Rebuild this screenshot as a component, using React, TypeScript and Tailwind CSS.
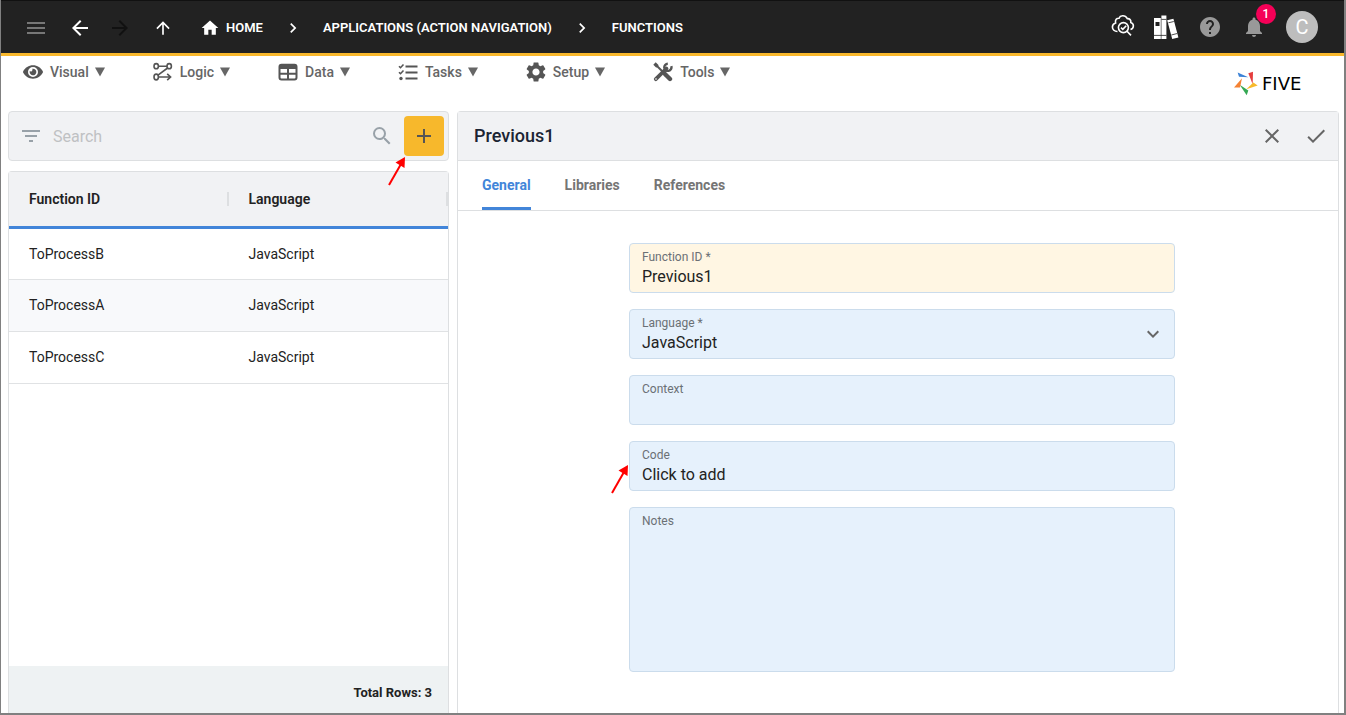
import React, { useState } from 'react';
import {
  MdAdd,
  MdArrowBack,
  MdArrowForward,
  MdArrowUpward,
  MdCheck,
  MdChevronRight,
  MdClose,
  MdExpandMore,
  MdFilterList,
  MdHelp,
  MdHome,
  MdMenu,
  MdNotifications,
  MdSearch,
  MdSettings,
} from 'react-icons/md';
import { FaEye } from 'react-icons/fa';

interface FunctionRow {
  id: string;
  language: string;
}

const rows: FunctionRow[] = [
  { id: 'ToProcessB', language: 'JavaScript' },
  { id: 'ToProcessA', language: 'JavaScript' },
  { id: 'ToProcessC', language: 'JavaScript' },
];

const LogicIcon = () => (
  <svg width="20" height="20" viewBox="0 0 20 20" fill="none" stroke="currentColor" strokeWidth="1.6">
    <ellipse cx="3.2" cy="4.2" rx="2.2" ry="2.6" />
    <ellipse cx="16.2" cy="4.2" rx="2.2" ry="2.6" />
    <ellipse cx="3.2" cy="15" rx="2.2" ry="2.9" />
    <path d="M5.4 4.2H14M14.6 6L5 13.2M5.4 15H17M14.2 11.8L17.6 15L14.2 18.2" />
  </svg>
);

const DataIcon = () => (
  <svg width="20" height="20" viewBox="0 0 20 20" fill="none" stroke="currentColor" strokeWidth="2">
    <rect x="1.5" y="2.8" width="17" height="14.8" rx="2" />
    <path d="M1.5 5H18.5" strokeWidth="4" />
    <path d="M2 11.8H18M10 6V17" />
  </svg>
);

const TasksIcon = () => (
  <svg width="20" height="20" viewBox="0 0 20 20" fill="none" stroke="currentColor" strokeWidth="2">
    <path d="M7.5 4.5H19.5M7.5 10.5H19.5M7.5 16.5H19.5" />
    <path d="M1 4.2L2.5 5.7L5.5 2.5M1 10.2L2.5 11.7L5.5 8.5" strokeWidth="1.6" />
    <circle cx="3" cy="16.5" r="1.7" fill="currentColor" stroke="none" />
  </svg>
);

const ToolsIcon = () => (
  <svg width="20" height="20" viewBox="0 0 20 20" fill="none" stroke="currentColor">
    <path d="M2.8 17.2L13.5 6.5" strokeWidth="3.8" strokeLinecap="round" />
    <path d="M18.3 4.2A3.6 3.6 0 1 1 14.8 1.7" strokeWidth="2.4" />
    <path d="M3 3L11 11" strokeWidth="2" />
    <path d="M1.5 1.5L4.5 4.5" strokeWidth="3.4" />
    <path d="M12.2 12.2L17 17" strokeWidth="4.4" strokeLinecap="round" />
    <circle cx="3" cy="17" r="0.8" fill="white" stroke="none" />
  </svg>
);

const CloudSearchIcon = () => (
  <svg width="24" height="24" viewBox="0 0 24 24" fill="none" stroke="currentColor" strokeWidth="1.6">
    <path d="M6.5 18.5C3.6 18.6 1.4 16.6 1.4 14C1.4 12 2.8 10.4 4.6 9.9C3.8 6.8 5.8 5 8 5.2C9 2.6 13.8 1.2 16.3 5.6C18.7 5.4 20.2 7.2 19.8 9.4C23.4 10.6 23.2 15.6 19.5 16.6" />
    <circle cx="12.4" cy="14.6" r="5" />
    <path d="M10 14.6L11.8 16.4L15.2 12.8M16 18.2L20 22.4" />
  </svg>
);

const BooksIcon = () => (
  <svg width="26" height="26" viewBox="0 0 26 26" fill="currentColor">
    <path d="M1 4H7.8V25H1Z" />
    <path d="M8.4 1.5H13.4V25H8.4Z" />
    <path d="M14.2 6.3L20.4 4.8L25.4 23.4L19.2 25Z" />
    <path d="M2.5 8H6.5V12H2.5Z" fill="#222222" />
    <path d="M1 21.4H13.4M8.4 5.4H13.4M15.4 8.8L20.8 7.5M18.3 21L24.2 19.5" fill="none" stroke="#222222" strokeWidth="0.8" />
  </svg>
);

const FiveMark = () => (
  <svg width="24" height="25" viewBox="432 214 72 74">
    <path d="M443 218L475 232L447 231Z" fill="#3b82d6" />
    <path d="M475 220L489 216L488 253Z" fill="#e53e3e" />
    <path d="M490 248L503 257L469 268Z" fill="#f7b92b" />
    <path d="M449 255L475 272L470 286Z" fill="#35a853" />
    <path d="M456 235L450 263L432 263Z" fill="#f58233" />
  </svg>
);

const RedArrow = () => (
  <svg width="18" height="30" viewBox="0 0 18 30">
    <path d="M1 29L13 8" stroke="#ff0000" strokeWidth="2" />
    <path d="M17 1L16.5 12L7.5 6.5Z" fill="#ff0000" />
  </svg>
);

const menus = [
  { label: 'Visual', icon: <FaEye size={20} /> },
  { label: 'Logic', icon: <LogicIcon /> },
  { label: 'Data', icon: <DataIcon /> },
  { label: 'Tasks', icon: <TasksIcon /> },
  { label: 'Setup', icon: <MdSettings size={24} className="-mx-0.5" /> },
  { label: 'Tools', icon: <ToolsIcon /> },
];

const tabs = ['General', 'Libraries', 'References'];

const fieldBox = 'relative rounded border border-[#cbdcec] px-3 pt-[3px] pb-[5px]';
const fieldLabel = 'block text-xs leading-5 text-[#6b7075]';
const fieldValue = 'block h-5 w-full bg-transparent text-left text-base leading-5 text-[#222222] outline-none';

const Header: React.FC = () => (
  <header className="flex h-14 shrink-0 items-center justify-between border-t border-b-3 border-t-[#111111] border-b-[#f9b82c] bg-[#222222] pr-[26px] pl-[23px] text-white">
    <div className="flex items-center pt-0.5">
      <button aria-label="Menu" className="mr-5 text-[#777777]"><MdMenu size={24} /></button>
      <button aria-label="Back" className="mr-4"><MdArrowBack size={24} /></button>
      <button aria-label="Forward" disabled className="mr-[21px] text-[#111111]"><MdArrowForward size={24} /></button>
      <button aria-label="Up" className="mr-[27px]"><MdArrowUpward size={20} /></button>
      <nav className="flex items-center text-[13px] leading-5 font-semibold">
        <a href="#home" className="flex items-center gap-1.5"><MdHome size={20} />HOME</a>
        <MdChevronRight size={20} className="mx-5" />
        <a href="#applications">APPLICATIONS (ACTION NAVIGATION)</a>
        <MdChevronRight size={20} className="mx-5" />
        <a href="#functions">FUNCTIONS</a>
      </nav>
    </div>
    <div className="flex items-center">
      <button aria-label="Inspect" className="mr-[18px] mb-1"><CloudSearchIcon /></button>
      <button aria-label="Library" className="mr-[19px]"><BooksIcon /></button>
      <button aria-label="Help" className="mr-5 text-[#999999]"><MdHelp size={24} /></button>
      <button aria-label="Notifications" className="relative mr-5 text-[#999999]">
        <MdNotifications size={24} />
        <span className="absolute -top-[11px] -right-2.5 flex h-5 w-5 items-center justify-center rounded-full bg-[#f50057] text-xs font-medium text-white">1</span>
      </button>
      <button className="flex h-8 w-8 items-center justify-center rounded-full bg-[#bdbdbd] text-xl text-white">C</button>
    </div>
  </header>
);

const MenuBar: React.FC = () => (
  <div className="flex h-[55px] shrink-0 items-center justify-between pr-[22px] pl-[22px]">
    <nav className="flex gap-12 self-start pt-1">
      {menus.map((menu) => (
        <button key={menu.label} className="flex h-6 items-center text-sm font-medium text-[#666666]">
          <span className="mr-[7px] text-[#555555]">{menu.icon}</span>
          {menu.label}
          <svg width="10" height="10" viewBox="0 0 10 10" fill="currentColor" className="ml-1.5">
            <path d="M0 0.5H10L5 9.5Z" />
          </svg>
        </button>
      ))}
    </nav>
    <div className="flex items-center gap-1">
      <FiveMark />
      <span className="w-[60px] font-['DejaVu_Sans'] text-lg leading-6 text-black">FIVE</span>
    </div>
  </div>
);

const FunctionList: React.FC = () => (
  <div className="flex min-h-0 flex-col gap-2.5">
    <div className="relative flex shrink-0 items-center rounded border border-[#dddfe1] bg-[#f1f2f4] py-1 pr-1 pl-2.5 text-[#98a1a8]">
      <MdFilterList size={24} />
      <input aria-label="Search" placeholder="Search" className="h-10 min-w-0 flex-1 bg-transparent px-2.5 text-base text-[#222222] outline-none placeholder:text-[#bfc1c3]" />
      <MdSearch size={24} className="mr-2.5" />
      <button aria-label="Add" className="flex h-10 w-10 items-center justify-center rounded bg-[#f7b82c] text-[#555555]"><MdAdd size={24} /></button>
      <div className="pointer-events-none absolute right-[42px] top-11"><RedArrow /></div>
    </div>
    <div className="flex min-h-0 flex-1 flex-col rounded-t border border-b-0 border-[#dddfe1]">
      <table className="w-full table-fixed text-left text-sm text-[#222222]">
        <thead>
          <tr className="h-[55px] border-b-3 border-[#4285d9] bg-[#f1f2f4]">
            {['Function ID', 'Language'].map((name) => (
              <th key={name} className="p-0 font-semibold">
                <div className="flex items-center justify-between pl-5">
                  {name}
                  <span className="h-3.5 w-0.5 bg-[#dddfe1]" />
                </div>
              </th>
            ))}
          </tr>
        </thead>
        <tbody>
          {rows.map((row) => (
            <tr key={row.id} className="h-[52px] border-b border-[#e0e2e4] even:bg-[#f8f9fb]">
              <td className="px-5">{row.id}</td>
              <td className="px-5">{row.language}</td>
            </tr>
          ))}
        </tbody>
      </table>
      <div className="mt-auto bg-[#eef2f3] px-4 pt-[17px] pb-2.5 text-right text-[13px] leading-5 font-bold text-[#222222]">Total Rows: 3</div>
    </div>
  </div>
);

const FunctionForm: React.FC = () => {
  const [tab, setTab] = useState('General');

  return (
    <div className="flex min-h-0 flex-col rounded-t border border-b-0 border-[#dddfe1]">
      <div className="flex h-[49px] shrink-0 items-center justify-between border-b border-[#dddfe1] bg-[#f1f2f4] pr-2.5 pl-4">
        <h1 className="text-lg font-medium text-[#1b2433]">Previous1</h1>
        <div className="flex gap-5 text-[#666666]">
          <button aria-label="Cancel"><MdClose size={24} /></button>
          <button aria-label="Save"><MdCheck size={24} /></button>
        </div>
      </div>
      <div role="tablist" className="flex h-[50px] shrink-0 gap-[34px] border-b border-[#dddfe1] px-6 text-sm font-bold">
        {tabs.map((name) => (
          <button
            key={name}
            role="tab"
            aria-selected={tab === name}
            onClick={() => setTab(name)}
            className={tab === name ? 'border-b-3 border-[#4285d9] pt-0.5 text-[#4285d9]' : 'border-b-3 border-transparent pt-0.5 text-[#757575]'}
          >
            {name}
          </button>
        ))}
      </div>
      <div className="pt-8 pl-2">
        <form className="mx-auto flex max-w-[546px] flex-col gap-4">
          <div className={`${fieldBox} bg-[#fff6e3]`}>
            <label htmlFor="functionId" className={fieldLabel}>Function ID *</label>
            <input id="functionId" defaultValue="Previous1" className={fieldValue} />
          </div>
          <div className={`${fieldBox} bg-[#e6f1fc]`}>
            <label htmlFor="language" className={fieldLabel}>Language *</label>
            <select id="language" className={`${fieldValue} appearance-none`}>
              <option>JavaScript</option>
            </select>
            <MdExpandMore size={24} className="pointer-events-none absolute top-3 right-[9px] text-[#666666]" />
          </div>
          <div className={`${fieldBox} bg-[#e6f1fc]`}>
            <label htmlFor="context" className={fieldLabel}>Context</label>
            <input id="context" className={fieldValue} />
          </div>
          <div className={`${fieldBox} bg-[#e6f1fc]`}>
            <label htmlFor="code" className={fieldLabel}>Code</label>
            <button id="code" type="button" className={fieldValue}>Click to add</button>
            <div className="pointer-events-none absolute top-[22px] -left-[19px]"><RedArrow /></div>
          </div>
          <div className={`${fieldBox} bg-[#e6f1fc]`}>
            <label htmlFor="notes" className={fieldLabel}>Notes</label>
            <textarea id="notes" rows={6} className="block w-full resize-none bg-transparent pb-[15px] text-base leading-5 text-[#222222] outline-none" />
          </div>
        </form>
      </div>
    </div>
  );
};

export default function App() {
  return (
    <div className="flex h-screen flex-col overflow-hidden border-r-2 border-b-2 border-l border-[#808080] bg-white font-[Roboto,sans-serif]">
      <Header />
      <MenuBar />
      <main className="grid min-h-0 flex-1 grid-cols-[1fr_2fr] gap-2 pr-[5px] pl-[7px]">
        <FunctionList />
        <FunctionForm />
      </main>
    </div>
  );
}
